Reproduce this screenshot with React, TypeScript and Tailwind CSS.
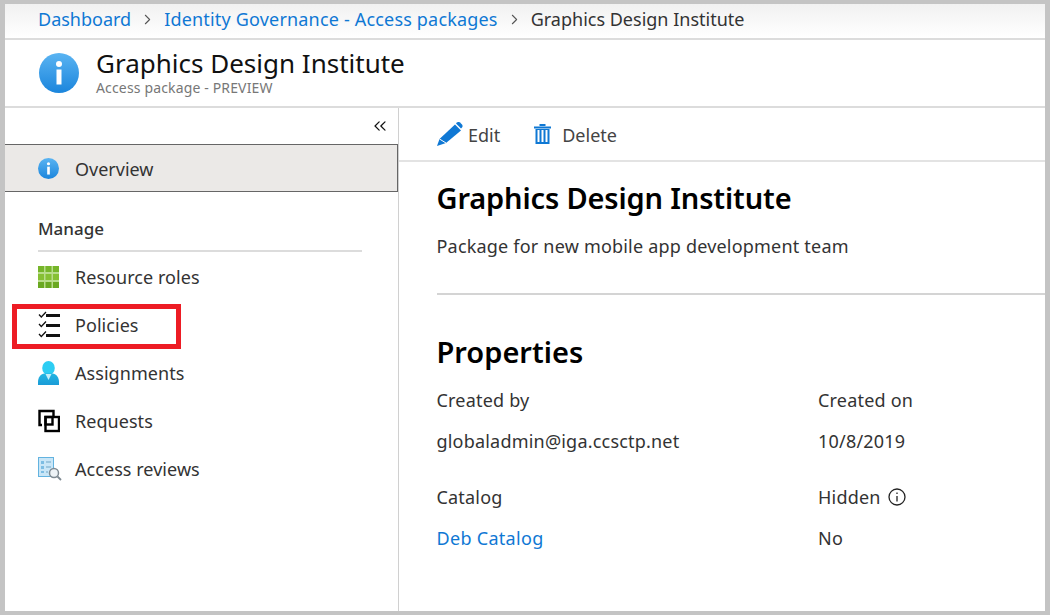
import { ChevronRight, ChevronsLeft } from 'lucide-react';

function InfoBall({ size }: { size: number }) {
  return (
    <svg width={size} height={size} viewBox="0 0 40 40">
      <defs>
        <linearGradient id={`ball${size}`} x1="0" y1="0" x2="0" y2="1">
          <stop offset="0" stopColor="#5ab4f2" />
          <stop offset="1" stopColor="#1b85dc" />
        </linearGradient>
      </defs>
      <circle cx="20" cy="20" r="20" fill={`url(#ball${size})`} />
      <rect x="17.5" y="16.5" width="5" height="15" fill="#fff" />
      <circle cx="20" cy="11" r="3" fill="#fff" />
    </svg>
  );
}

function GridIcon() {
  return (
    <svg width="21" height="22" viewBox="0 0 21 22">
      <rect width="21" height="22" fill="#b9dd8c" />
      {[0, 7.5, 15].map((x) =>
        [0, 8, 16].map((y) => (
          <rect key={`${x}-${y}`} x={x} y={y} width="6" height="6" fill={y === 16 ? '#6aa821' : y === 8 ? '#86c034' : '#76b52a'} />
        )),
      )}
    </svg>
  );
}

function ChecklistIcon() {
  return (
    <svg width="22" height="28" viewBox="0 0 22 28" fill="none" stroke="#111">
      <path d="M1 3.500l2.300 2.500L8 1M1 13l2.300 2.500L8 10.500M1 23l2.300 2.500L8 20.500" strokeWidth="1.300" />
      <path d="M8 4.500h14M8 14.500h14M8 24.500h14" strokeWidth="3" />
    </svg>
  );
}

function PersonIcon() {
  return (
    <svg width="21" height="24" viewBox="0 0 21 24">
      <defs>
        <linearGradient id="personBody" x1="0" y1="0" x2="0" y2="1">
          <stop offset="0" stopColor="#22b6e2" />
          <stop offset="1" stopColor="#1a9bd7" />
        </linearGradient>
      </defs>
      <ellipse cx="10.500" cy="7" rx="6.300" ry="7" fill="#2dcdf3" />
      <path d="M0 24v-3c0-5 3-8 6.500-8.500h8c3.500 .5 6.500 3.500 6.500 8.500v3z" fill="url(#personBody)" />
      <path d="M7.500 13h6l-3 6z" fill="#c4f0fb" />
    </svg>
  );
}

function RequestsIcon() {
  return (
    <svg width="22" height="24" viewBox="0 0 22 24" fill="none" stroke="#000" strokeWidth="2.400">
      <path d="M4 16H1.500V2h14v5" />
      <rect x="7.500" y="8" width="13.500" height="14" />
      <rect x="7.500" y="8" width="7" height="7.500" />
    </svg>
  );
}

function ReviewIcon() {
  return (
    <svg width="24" height="24" viewBox="0 0 24 24">
      <rect x="0.500" y="0.500" width="15" height="19" fill="#c9e6f7" stroke="#63b3e0" />
      <path d="M3 4h3v3H3zM3 9h3v3H3zM3 14h3v2H3z" fill="#7dbde3" />
      <path d="M8 5h5M8 10h5M8 15h2" stroke="#6fa5c6" />
      <circle cx="16" cy="16" r="4.500" fill="#eef3f6" stroke="#7f8a92" strokeWidth="1.500" />
      <path d="M19.500 19.500L23 23" stroke="#7f8a92" strokeWidth="1.800" />
    </svg>
  );
}

function PencilIcon() {
  return (
    <svg width="26" height="24" viewBox="0 0 26 24">
      <path d="M0 24l2.500-7L18 2.500l6 6L9 21z" fill="#0f78d4" />
      <path d="M19 1.500l1-1c1-.8 2-.8 3 0l2 2c.8 1 .8 2 0 3l-1 1z" fill="#0f78d4" />
      <path d="M2.500 17l6.500 4" stroke="#fff" strokeWidth="1" />
    </svg>
  );
}

function TrashIcon() {
  return (
    <svg width="17" height="20" viewBox="0 0 17 20" fill="#0f78d4">
      <path d="M0 2.500h17v2H0zM5.500 0h6v2h-6z" />
      <path d="M1.500 5h14v15h-14zM3.500 6v12h2V6zM7.500 6v12h2V6zM11.500 6v12h2V6z" fillRule="evenodd" />
    </svg>
  );
}

function NavRow({ icon, label, marked }: { icon: React.ReactNode; label: string; marked?: boolean }) {
  return (
    <div className="relative flex h-12 items-center">
      <div className="flex w-[70px] justify-start pl-[33px]">{icon}</div>
      <span className="text-[18px] tracking-[0.05px] text-[#333]">{label}</span>
      {marked && <div className="absolute left-[7px] top-[3px] h-[45px] w-[169px] border-[5px] border-[#ed1c24]" />}
    </div>
  );
}

export default function App() {
  return (
    <div className="h-[615px] w-[1050px] overflow-hidden bg-[#c4c4c4] pb-[4px] pl-[5px] pr-[5px] pt-[4px] font-['Noto_Sans','Open_Sans',sans-serif]">
      <div className="flex h-full flex-col bg-white">
        <div className="flex h-[36px] shrink-0 items-center border-b-2 border-[#dcdcdc] bg-gradient-to-b from-[#f1f1f1] to-white pb-[3px] pl-[33px] text-[18px]">
          <span className="text-[#0f78d4]">Dashboard</span>
          <ChevronRight className="mx-[8px] text-[#555]" size={17} strokeWidth={1.5} />
          <span className="tracking-[0.18px] text-[#0f78d4]">Identity Governance - Access packages</span>
          <ChevronRight className="mx-[8px] text-[#555]" size={17} strokeWidth={1.5} />
          <span className="text-[#333]">Graphics Design Institute</span>
        </div>

        <div className="flex h-[68px] shrink-0 items-center border-b-2 border-[#dcdcdc] pl-[34px]">
          <InfoBall size={40} />
          <div className="ml-[17px] -mt-[2px]">
            <div className="text-[26px] leading-[32px] text-[#111]">Graphics Design Institute</div>
            <div className="text-[14px] leading-[18px] tracking-[0.15px] text-[#777]">Access package - PREVIEW</div>
          </div>
        </div>

        <div className="flex min-h-0 flex-1">
          <aside className="w-[394px] shrink-0 border-r border-[#d0d0d0]">
            <div className="flex h-[36px] items-center justify-end pr-[8px]">
              <ChevronsLeft size={20} strokeWidth={1.5} className="text-[#111]" />
            </div>
            <div className="flex h-[48px] items-center border border-l-0 border-[#666] bg-[#ebe9e7] pl-[33px]">
              <InfoBall size={21} />
              <span className="ml-[16px] pt-[2px] text-[18px] text-[#333]">Overview</span>
            </div>
            <div className="mx-[33px] mt-[24px] flex h-[36px] w-[324px] items-center border-b-2 border-[#dcdcdc] pb-[8px] text-[17px] font-medium text-[#333]">
              Manage
            </div>
            <div className="mt-[1px]">
              <NavRow icon={<GridIcon />} label="Resource roles" />
              <NavRow icon={<ChecklistIcon />} label="Policies" marked />
              <NavRow icon={<PersonIcon />} label="Assignments" />
              <NavRow icon={<RequestsIcon />} label="Requests" />
              <NavRow icon={<ReviewIcon />} label="Access reviews" />
            </div>
          </aside>

          <main className="min-w-0 flex-1">
            <div className="flex h-[54px] items-center border-b-2 border-[#e3e3e3] pl-[38px] text-[18px] text-[#444]">
              <PencilIcon />
              <span className="ml-[5px] pt-[2px]">Edit</span>
              <span className="ml-[34px]"><TrashIcon /></span>
              <span className="ml-[11px] pt-[2px]">Delete</span>
            </div>
            <div className="pl-[37.5px]">
              <h1 className="mt-[18px] text-[29px] font-semibold leading-[36px] tracking-[-0.15px] text-black">Graphics Design Institute</h1>
              <p className="mt-[18px] text-[18px] leading-[24px] tracking-[0.2px] text-[#333]">Package for new mobile app development team</p>
              <div className="mt-[35px] h-[2px] bg-[#d4d4d4]" />
              <h2 className="mt-[39px] text-[29px] font-semibold leading-[36px] text-black">Properties</h2>
              <div className="mt-[18px] grid grid-cols-[381.5px_1fr] text-[18px] leading-[24px] tracking-[0.2px] text-[#333]">
                <div className="h-[41px]">Created by</div>
                <div>Created on</div>
                <div className="h-[56px]">globaladmin@iga.ccsctp.net</div>
                <div>10/8/2019</div>
                <div className="h-[41px]">Catalog</div>
                <div className="flex h-[24px] items-center">
                  Hidden
                  <svg className="ml-[7px]" width="18" height="18" viewBox="0 0 18 18" fill="none" stroke="#222">
                    <circle cx="9" cy="9" r="8" strokeWidth="1.300" />
                    <path d="M9 8v5.500M9 4.500v1.500" strokeWidth="1.300" />
                  </svg>
                </div>
                <div className="tracking-[0.3px] text-[#0f78d4]">Deb Catalog</div>
                <div>No</div>
              </div>
            </div>
          </main>
        </div>
      </div>
    </div>
  );
}
